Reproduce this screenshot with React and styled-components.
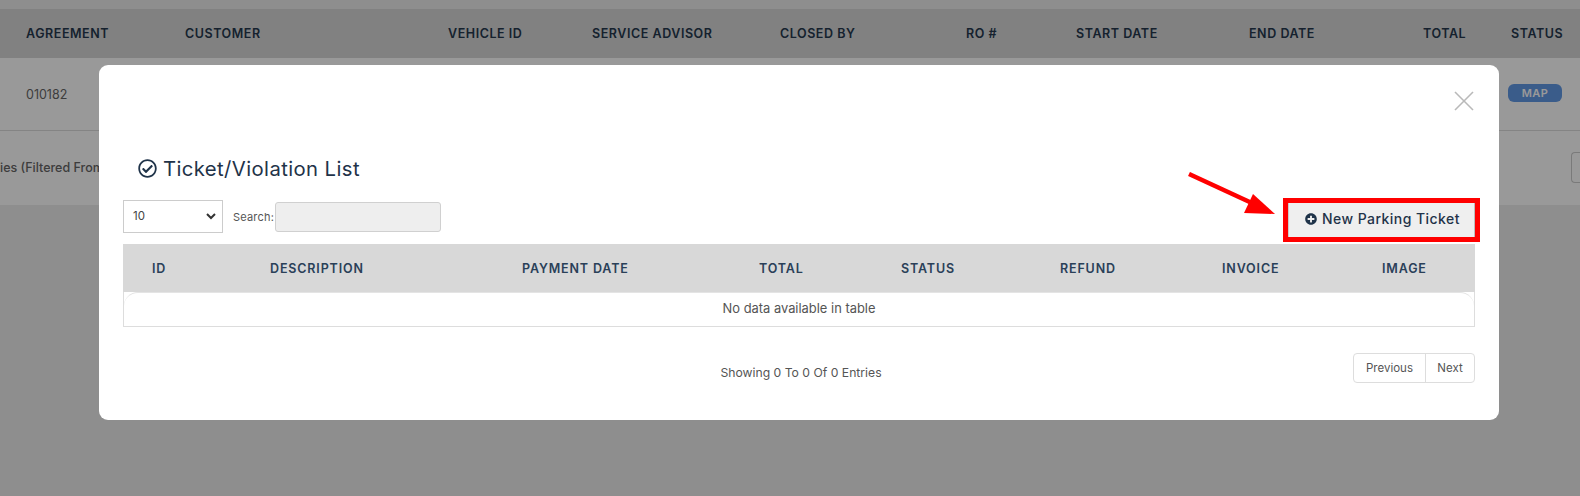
import styled, { createGlobalStyle } from 'styled-components';
import { FaRegCheckCircle, FaPlusCircle } from 'react-icons/fa';

const GlobalStyle = createGlobalStyle`
    html, body {
        margin: 0;
        height: 496px;
        overflow: hidden;
        background: #ededed;
        font-family: Inter, "Open Sans", sans-serif;
    }
    * {
        box-sizing: border-box;
    }
`;

const Page = styled.div`
    height: 496px;
    padding-top: 9px;
`;

const Panel = styled.div`
    background: #fff;
    height: 196px;
`;

const HeadRow = styled.div`
    display: grid;
    grid-template-columns: 159px 263px 144px 188px 186px 110px 173px 174px 88px 1fr;
    align-items: center;
    height: 49px;
    padding-left: 26px;
    background: #d8d8d8;
`;

const HeadCell = styled.div`
    font-size: 12.5px;
    font-weight: 600;
    letter-spacing: 0.55px;
    color: #25384e;
    white-space: nowrap;
`;

const TicketHeadCell = styled(HeadCell)`
    letter-spacing: 0.85px;
    color: #2a4058;
`;

const BodyRow = styled.div`
    display: flex;
    justify-content: space-between;
    align-items: center;
    height: 73px;
    padding: 0 18px 0 26px;
    border-bottom: 1px solid #ddd;
`;

const BodyCell = styled.div`
    font-size: 12.5px;
    color: #666;
`;

const MapBadge = styled.span`
    display: block;
    width: 54px;
    height: 18px;
    margin-bottom: 2px;
    border-radius: 6px;
    background: #6199e6;
    color: #fff;
    font-size: 11px;
    font-weight: 600;
    letter-spacing: 0.4px;
    line-height: 18px;
    text-align: center;
`;

const PanelFooter = styled.div`
    display: flex;
    justify-content: space-between;
    align-items: center;
    height: 73px;
    padding-bottom: 1px;
`;

const FooterInfo = styled.div`
    font-size: 12.5px;
    font-weight: 500;
    color: #666;
`;

const PageStub = styled.div`
    width: 9px;
    height: 31px;
    border: 1px solid #ccc;
    border-right: 0;
    border-radius: 4px 0 0 4px;
`;

const Overlay = styled.div`
    position: fixed;
    inset: 0;
    padding: 65px 81px 0 99px;
    background: rgba(0, 0, 0, 0.4);
`;

const Modal = styled.div`
    position: relative;
    height: 355px;
    padding: 0 24px;
    border-radius: 9px;
    background: #fff;
`;

const CloseRow = styled.div`
    display: flex;
    justify-content: flex-end;
    height: 85px;
    padding: 26px 1px 0 0;
`;

const CloseIcon = styled.svg`
    display: block;
    width: 20px;
    height: 20px;
    stroke: #b9b9b9;
    stroke-width: 1.6;
`;

const Title = styled.h2`
    display: flex;
    align-items: center;
    gap: 6px;
    height: 36px;
    margin: 0 0 0 15px;
    font-size: 20.3px;
    font-weight: 400;
    letter-spacing: 0.4px;
    color: #1f3349;

    svg {
        font-size: 19px;
    }
`;

const Controls = styled.div`
    display: flex;
    align-items: center;
    height: 44px;
    margin: 9px -5px 5px 0;
`;

const FakeSelect = styled.div`
    display: flex;
    justify-content: space-between;
    align-items: center;
    width: 100px;
    height: 33px;
    margin-top: -2px;
    padding: 0 6px 0 9px;
    border: 1px solid #ccc;
    font-size: 11.5px;
    color: #444;
`;

const SearchLabel = styled.span`
    margin-left: 10px;
    margin-right: 1px;
    font-size: 11px;
    letter-spacing: 0.2px;
    color: #555;
`;

const SearchInput = styled.div`
    width: 166px;
    height: 30px;
    border: 1px solid #d0d0d0;
    border-radius: 3px;
    background: #eee;
`;

const Highlight = styled.div`
    margin-left: auto;
    margin-top: 6px;
    border: 5px solid #f00;
`;

const NewButton = styled.button`
    display: flex;
    align-items: center;
    gap: 5px;
    width: 187px;
    height: 34px;
    padding: 0 0 3px 16px;
    border: 0;
    border-left: 1px solid #ccc;
    border-right: 1px solid #bbb;
    background: #efefef;
    font-family: inherit;
    font-size: 14px;
    font-weight: 500;
    letter-spacing: 0.45px;
    color: #1f3349;
    white-space: nowrap;

    svg {
        font-size: 12px;
    }
`;

const TableHead = styled.div`
    display: grid;
    grid-template-columns: 118px 252px 237px 142px 159px 162px 160px 1fr;
    align-items: center;
    height: 48px;
    padding-left: 29px;
    background: #d8d8d8;
`;

const TableEmpty = styled.div`
    display: flex;
    justify-content: center;
    align-items: center;
    height: 35px;
    border: 1px solid #ddd;
    border-top: 0;
    font-size: 12.9px;
    color: #555;
    background: #fff;
`;

const EmptyInner = styled.div`
    flex: 1;
    align-self: stretch;
    display: flex;
    justify-content: center;
    align-items: center;
    padding-bottom: 2px;
    border-top: 1px solid #e4e4e4;
    border-radius: 14px 14px 0 0;
`;

const ListFooter = styled.div`
    display: grid;
    grid-template-columns: 1fr auto 1fr;
    align-items: center;
    margin-top: 26px;
`;

const ListInfo = styled.div`
    grid-column: 2;
    padding: 8px 0 0 4px;
    font-size: 12.2px;
    color: #555;
`;

const Pagination = styled.div`
    justify-self: end;
    display: flex;
    height: 30px;
    border: 1px solid #ddd;
    border-radius: 4px;
`;

const PageLink = styled.div`
    display: flex;
    align-items: center;
    justify-content: center;
    width: ${(props) => props.$width}px;
    font-size: 11.5px;
    color: #555;

    & + & {
        border-left: 1px solid #ddd;
    }
`;

const Arrow = styled.svg`
    position: absolute;
    left: 1089px;
    top: 107px;
    width: 90px;
    height: 44px;
`;

const pageColumns = ['AGREEMENT', 'CUSTOMER', 'VEHICLE ID', 'SERVICE ADVISOR', 'CLOSED BY', 'RO #', 'START DATE', 'END DATE', 'TOTAL', 'STATUS'];
const ticketColumns = ['ID', 'DESCRIPTION', 'PAYMENT DATE', 'TOTAL', 'STATUS', 'REFUND', 'INVOICE', 'IMAGE'];

const App = () => {
    return (
        <>
            <GlobalStyle />
            <Page>
                <Panel>
                    <HeadRow>
                        {pageColumns.map((name) => <HeadCell key={name}>{name}</HeadCell>)}
                    </HeadRow>
                    <BodyRow>
                        <BodyCell>010182</BodyCell>
                        <MapBadge>MAP</MapBadge>
                    </BodyRow>
                    <PanelFooter>
                        <FooterInfo>ies (Filtered From</FooterInfo>
                        <PageStub />
                    </PanelFooter>
                </Panel>
            </Page>
            <Overlay>
                <Modal>
                    <CloseRow>
                        <CloseIcon viewBox="0 0 20 20">
                            <line x1="1" y1="1" x2="19" y2="19" />
                            <line x1="19" y1="1" x2="1" y2="19" />
                        </CloseIcon>
                    </CloseRow>
                    <Title><FaRegCheckCircle /> Ticket/Violation List</Title>
                    <Controls>
                        <FakeSelect>
                            10
                            <svg width="10" height="7" viewBox="0 0 10 7">
                                <path d="M1 1l4 4 4-4" fill="none" stroke="#333" strokeWidth="2" />
                            </svg>
                        </FakeSelect>
                        <SearchLabel>Search:</SearchLabel>
                        <SearchInput />
                        <Highlight>
                            <NewButton><FaPlusCircle /> New Parking Ticket</NewButton>
                        </Highlight>
                    </Controls>
                    <TableHead>
                        {ticketColumns.map((name) => <TicketHeadCell key={name}>{name}</TicketHeadCell>)}
                    </TableHead>
                    <TableEmpty>
                        <EmptyInner>No data available in table</EmptyInner>
                    </TableEmpty>
                    <ListFooter>
                        <ListInfo>Showing 0 To 0 Of 0 Entries</ListInfo>
                        <Pagination>
                            <PageLink $width={71}>Previous</PageLink>
                            <PageLink $width={49}>Next</PageLink>
                        </Pagination>
                    </ListFooter>
                    <Arrow viewBox="0 0 90 44">
                        <line x1="1" y1="2" x2="66" y2="32" stroke="#f00" strokeWidth="4.5" />
                        <polygon points="87,42 65,22 56,41" fill="#f00" />
                    </Arrow>
                </Modal>
            </Overlay>
        </>
    );
};

export default App;
